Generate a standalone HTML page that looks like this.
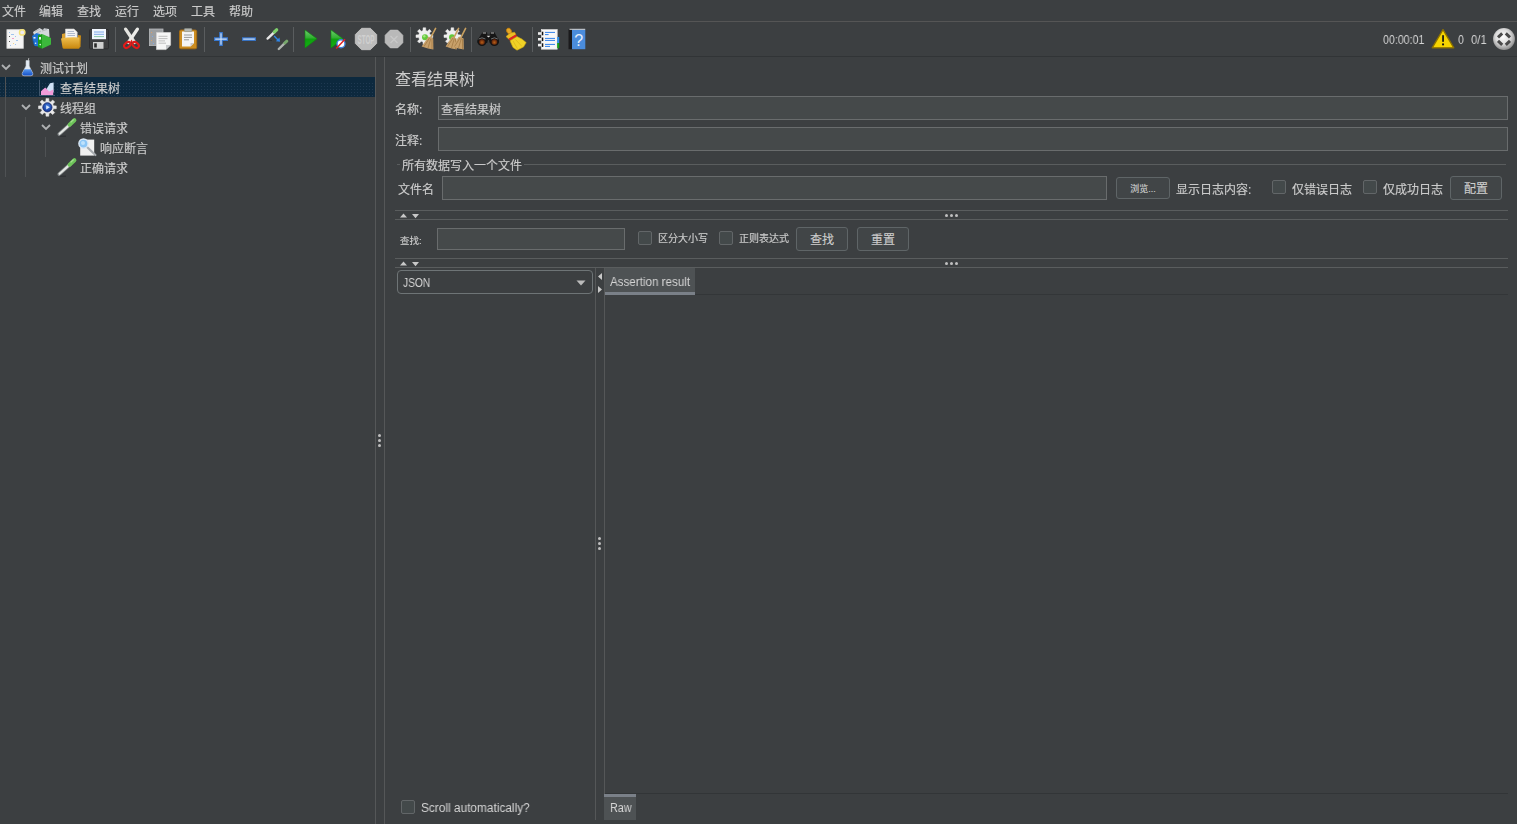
<!DOCTYPE html>
<html lang="zh">
<head>
<meta charset="utf-8">
<title>Apache JMeter</title>
<style>
*{box-sizing:border-box;margin:0;padding:0}
html,body{width:1517px;height:824px;overflow:hidden;background:#3c3f41}
body{position:relative;font-family:"Liberation Sans","Noto Sans CJK SC",sans-serif;font-size:12px;color:#cccccc;line-height:1;-webkit-text-stroke:0.15px #cccccc}
.a{position:absolute}
.t{position:absolute;white-space:nowrap;line-height:14px;height:14px;margin-top:1px;will-change:transform}
.en{-webkit-text-stroke:0;color:#d4d4d4}
.hl{position:absolute;height:1px;background:#5a5d5e}
.vl{position:absolute;width:1px;background:#555758}
.fld{position:absolute;background:#45494a;border:1px solid #696c6d}
.btn{position:absolute;background:#414547;border:1px solid #5f6567;padding-top:1px;border-radius:3px;text-align:center}
.cb{position:absolute;width:14px;height:14px;background:#43494a;border:1px solid #626668;border-radius:2px}
.sep{position:absolute;top:27px;width:1px;height:25px;background:#515151}
.dot{position:absolute;width:3px;height:3px;border-radius:50%;background:#c0c0c0}
</style>
</head>
<body>
<!-- menu bar -->
<div class="a" style="left:0;top:0;width:1517px;height:21px;background:#3c3f41"></div>
<div class="t" style="left:2px;top:4px">文件</div>
<div class="t" style="left:39px;top:4px">编辑</div>
<div class="t" style="left:77px;top:4px">查找</div>
<div class="t" style="left:115px;top:4px">运行</div>
<div class="t" style="left:153px;top:4px">选项</div>
<div class="t" style="left:191px;top:4px">工具</div>
<div class="t" style="left:229px;top:4px">帮助</div>
<div class="hl" style="left:0;top:21px;width:1517px;background:#555555"></div>
<!-- toolbar -->
<div id="toolbar">
<svg class="a" style="left:0;top:22px" width="620" height="34" viewBox="0 22 620 34">
<defs><linearGradient id="gplay" x1="0" y1="0" x2="0" y2="1"><stop offset="0" stop-color="#6fcf6f"/><stop offset="0.45" stop-color="#2fae2f"/><stop offset="0.5" stop-color="#0fa00f"/><stop offset="1" stop-color="#12b012"/></linearGradient><linearGradient id="gfold" x1="0" y1="0" x2="0" y2="1"><stop offset="0" stop-color="#f0c050"/><stop offset="1" stop-color="#c8860c"/></linearGradient><linearGradient id="gblue" x1="0" y1="0" x2="1" y2="0"><stop offset="0" stop-color="#3b7fd8"/><stop offset="1" stop-color="#5a9be6"/></linearGradient><radialGradient id="glens" cx="0.5" cy="0.6" r="0.6"><stop offset="0" stop-color="#b86018"/><stop offset="1" stop-color="#4a1406"/></radialGradient><radialGradient id="gball" cx="0.45" cy="0.4" r="0.6"><stop offset="0" stop-color="#ffffff"/><stop offset="0.55" stop-color="#dcdcdc"/><stop offset="1" stop-color="#8e8e8e"/></radialGradient></defs>
<rect x="115" y="27" width="1" height="25" fill="#5a5d5f"/>
<rect x="204" y="27" width="1" height="25" fill="#5a5d5f"/>
<rect x="293" y="27" width="1" height="25" fill="#5a5d5f"/>
<rect x="410" y="27" width="1" height="25" fill="#5a5d5f"/>
<rect x="471" y="27" width="1" height="25" fill="#5a5d5f"/>
<rect x="532" y="27" width="1" height="25" fill="#5a5d5f"/>
<rect x="6.9" y="29.7" width="16.4" height="18.6" fill="#f5f5f5" stroke="#d2d2d2" stroke-width="0.8"/>
<g fill="#9fc4ee"><rect x="9" y="32" width="1" height="1"/><rect x="11" y="34" width="3" height="1"/><rect x="15" y="36" width="1" height="1"/><rect x="9" y="41" width="1" height="1" fill="#555"/><rect x="9" y="36" width="1" height="1" fill="#555"/><rect x="12" y="38" width="2" height="1" fill="#f0a0c8"/><rect x="16" y="40" width="2" height="1"/><rect x="13" y="43" width="1" height="1" fill="#f0d890"/><rect x="10" y="45" width="1" height="1"/><rect x="15" y="44" width="1" height="1"/></g>
<circle cx="22.2" cy="32.4" r="2.7" fill="#eeeaf2" stroke="#f4e27a" stroke-width="1.5"/>
<path d="M33 32 L39.5 28 L43 30 L44 28.2 L49 29 L49.5 37 L40 36 L34 35Z" fill="#d4d8dc"/>
<path d="M35 31.5 L40 29 M42 31 L47 29.5 M37 33 L41 31" stroke="#a8acb0" stroke-width="0.8"/>
<path d="M32 36 L36.5 33 L40 34 L40 46.5 L34.5 46Z" fill="#1e72d4"/>
<path d="M32 36 L34.5 46 L33 43Z" fill="#1558aa"/>
<rect x="33.5" y="37" width="2" height="1.6" fill="#e8f0fa"/><circle cx="35.6" cy="43.3" r="0.8" fill="#e8f0fa"/>
<path d="M38 35.2 L42 34 L42 48.8 L38 47Z" fill="#1c9c1c"/>
<path d="M42 34 L44.5 35 L51 38 L51 44.5 L42 48.8Z" fill="#3cb83c"/>
<rect x="39" y="37" width="2" height="2.6" fill="#eaf6ea"/><circle cx="40.2" cy="44.6" r="0.8" fill="#eaf6ea"/>
<path d="M62 34 L66 33 L66 38 L62 39Z" fill="#d9a030"/>
<path d="M65.5 29 L74 29 L77.2 32 L77.2 39 L65.5 39Z" fill="#f4f4f4" stroke="#d0d0d0" stroke-width="0.6"/>
<path d="M67.5 31.5 H74 M67.5 33.5 H75 M67.5 35.5 H75" stroke="#a8b4c8" stroke-width="0.9"/>
<path d="M78 35 L81 35.5 L80.5 47 L78 48Z" fill="#c88a14"/>
<path d="M61 38.5 Q70 36.5 79.5 37.5 L79.5 48 Q79.5 48.8 78.5 48.8 L64 48.8 Q62.8 48.8 62.5 47.5Z" fill="url(#gfold)"/>
<rect x="89.5" y="29.5" width="19" height="19.3" rx="1" fill="#3e3e40" stroke="#2a2a2c" stroke-width="0.8"/>
<rect x="92" y="29" width="14" height="10.2" fill="#f2f7ff"/>
<path d="M94 32 H104 M94 34.3 H104" stroke="#7fa8e8" stroke-width="1"/><path d="M94 36.6 H104" stroke="#8cc8a8" stroke-width="1"/>
<rect x="93" y="42" width="10.5" height="6.8" fill="#cfcfcf"/><rect x="94.2" y="43.3" width="2.6" height="4.2" fill="#2a2a2a"/>
<path d="M125.6 29.2 L134.6 42.5" stroke="#e4e4e0" stroke-width="3.3" stroke-linecap="round"/>
<path d="M137.4 29.2 L128.4 42.5" stroke="#ecece8" stroke-width="3.3" stroke-linecap="round"/>
<ellipse cx="127.3" cy="45" rx="3.6" ry="2.4" transform="rotate(-38 127.3 45)" fill="none" stroke="#e21a1a" stroke-width="2"/>
<ellipse cx="135.7" cy="45" rx="3.6" ry="2.4" transform="rotate(38 135.7 45)" fill="none" stroke="#e21a1a" stroke-width="2"/>
<path d="M130 42.5 L131.5 39.5 L133 42.5Z" fill="#e21a1a"/>
<rect x="149.5" y="29" width="13.5" height="16.6" fill="#9c9fa2" stroke="#b9bbbe" stroke-width="0.8"/>
<g fill="#d8a070"><rect x="151" y="32" width="1" height="1"/><rect x="152" y="36" width="1" height="1" fill="#7fa8e8"/><rect x="151" y="40" width="1" height="1"/><rect x="153" y="43" width="1" height="1" fill="#7fa8e8"/></g>
<path d="M156.5 32.5 H170.6 V45 L166 49.6 H156.5Z" fill="#f5f5f5" stroke="#d4d4d4" stroke-width="0.7"/>
<path d="M166 49.6 V45 H170.6Z" fill="#c4c6c8"/>
<path d="M158.5 36.3 H167.5 M158.5 38.6 H167.5 M158.5 40.9 H165 M158.5 43.2 H166" stroke="#b0b0b0" stroke-width="0.8"/>
<rect x="179.5" y="30" width="17.2" height="18.8" rx="1.5" fill="#cb8c20" stroke="#a86c10" stroke-width="0.9"/>
<path d="M182 31.5 H194 V43 L190.5 46.6 H182Z" fill="#f5f5f5"/>
<path d="M190.5 46.6 V43 H194Z" fill="#c9c9c9"/>
<rect x="184.3" y="28.6" width="7.6" height="3" rx="0.8" fill="#b4b8b4" stroke="#8a8e8a" stroke-width="0.6"/>
<path d="M184 35 H192 M184 37.4 H192 M184 39.8 H189" stroke="#8e8e8e" stroke-width="0.9"/>
<path d="M219.2 32 H222.8 V37.3 H228 V40.9 H222.8 V46 H219.2 V40.9 H214 V37.3 H219.2Z" fill="#3878d0"/>
<path d="M220.4 33.2 H221.6 V38.5 H226.8 V39.7 H221.6 V44.8 H220.4 V39.7 H215.2 V38.5 H220.4Z" fill="#cfe0f6"/>
<rect x="242" y="37.3" width="14" height="3.6" fill="#3878d0"/><rect x="243.2" y="38.5" width="11.6" height="1.2" fill="#cfe0f6"/>
<path d="M267.6 38.6 L274.6 31.8" stroke="#e6e6e6" stroke-width="2.4" stroke-linecap="round"/>
<path d="M274.3 32 L276.7 29.8" stroke="#7fd06c" stroke-width="3.2" stroke-linecap="round"/>
<path d="M268.5 40 L272 40.6" stroke="#2c2e30" stroke-width="1"/>
<path d="M274.2 36 L278 40" stroke="#2f86e8" stroke-width="1.3"/><path d="M280 41.8 L275.8 41.3 L279.5 37.6Z" fill="#2f86e8"/>
<path d="M278.8 49 L285 42.8" stroke="#b0b4b0" stroke-width="2.4" stroke-linecap="round"/>
<path d="M284.8 43 L286.8 41.2" stroke="#78a86c" stroke-width="3" stroke-linecap="round"/>
<path d="M305 30 L317 38.8 L305 48Z" fill="url(#gplay)" stroke="#0c8a0c" stroke-width="0.6"/>
<path d="M331 30 L343 38.8 L331 48Z" fill="url(#gplay)" stroke="#0c8a0c" stroke-width="0.6"/>
<circle cx="341" cy="43.8" r="4" fill="#ffffff" stroke="#3f82dc" stroke-width="1.4"/>
<path d="M336.2 48.6 L345 39.2" stroke="#e02222" stroke-width="1.5"/>
<polygon points="376.7,43.4 370.4,49.7 361.6,49.7 355.3,43.4 355.3,34.6 361.6,28.3 370.4,28.3 376.7,34.6" fill="#bcbcbc" stroke="#c8c8c8" stroke-width="0.8"/>
<text x="366" y="43.6" font-family="Liberation Sans, sans-serif" font-weight="bold" font-size="12" fill="#d0d0d0" text-anchor="middle" textLength="17" lengthAdjust="spacingAndGlyphs">STOP</text>
<polygon points="402.9,42.7 397.7,47.9 390.3,47.9 385.1,42.7 385.1,35.3 390.3,30.1 397.7,30.1 402.9,35.3" fill="#b9b9b9" stroke="#c2c2c2" stroke-width="0.6"/>
<path d="M390.5 36 L397.5 43 M397.5 36 L390.5 43" stroke="#c9c9c9" stroke-width="1.2"/>
<path d="M430.1 34.8 L432.8 34.9 L432.8 37.5 L430.1 37.6 L429.4 39.3 L431.3 41.2 L429.4 43.1 L427.5 41.2 L425.8 41.9 L425.7 44.6 L423.1 44.6 L423.0 41.9 L421.3 41.2 L419.4 43.1 L417.5 41.2 L419.4 39.3 L418.7 37.6 L416.0 37.5 L416.0 34.9 L418.7 34.8 L419.4 33.1 L417.5 31.2 L419.4 29.3 L421.3 31.2 L423.0 30.5 L423.1 27.8 L425.7 27.8 L425.8 30.5 L427.5 31.2 L429.4 29.3 L431.3 31.2 L429.4 33.1Z" fill="#eeeeee" stroke="#eeeeee" stroke-width="0.5" stroke-linejoin="round"/>
<circle cx="425" cy="37.2" r="3" fill="#62c83a"/><circle cx="424.3" cy="36.3" r="1.2" fill="#a4e480"/>
<path d="M435.6 28.4 L430.4 38.2" stroke="#c8a060" stroke-width="1.6" stroke-linecap="round"/>
<path d="M428.6 36.4 L433.2 38.6 L433.4 49.6 L428 48.6 L421.6 46.4Z" fill="#c8a06a"/>
<path d="M429.5 38 L424 46.5 M430.8 38.5 L428 48 M432 39 L432 49" stroke="#a27a44" stroke-width="0.8"/>
<path d="M458.1 34.8 L460.8 34.9 L460.8 37.5 L458.1 37.6 L457.4 39.3 L459.3 41.2 L457.4 43.1 L455.5 41.2 L453.8 41.9 L453.7 44.6 L451.1 44.6 L451.0 41.9 L449.3 41.2 L447.4 43.1 L445.5 41.2 L447.4 39.3 L446.7 37.6 L444.0 37.5 L444.0 34.9 L446.7 34.8 L447.4 33.1 L445.5 31.2 L447.4 29.3 L449.3 31.2 L451.0 30.5 L451.1 27.8 L453.7 27.8 L453.8 30.5 L455.5 31.2 L457.4 29.3 L459.3 31.2 L457.4 33.1Z" fill="#eeeeee" stroke="#eeeeee" stroke-width="0.5" stroke-linejoin="round"/>
<circle cx="452" cy="37.2" r="3" fill="#62c83a"/>
<path d="M458.6 28.4 L453.6 38.2" stroke="#c8a060" stroke-width="1.6" stroke-linecap="round"/>
<path d="M452 36.4 L456.6 38.6 L456.8 49.6 L451.5 48.6 L445.6 46.4Z" fill="#c8a06a"/>
<path d="M453 38 L447.5 46.5 M454.3 38.5 L451.5 48 M455.5 39 L455.5 49" stroke="#a27a44" stroke-width="0.8"/>
<path d="M465.6 28.4 L460.6 38.2" stroke="#c8a060" stroke-width="1.6" stroke-linecap="round"/>
<path d="M459 36.4 L463.6 38.6 L463.8 49.6 L458.5 48.6 L452.6 46.4Z" fill="#c8a06a"/>
<path d="M460 38 L454.5 46.5 M461.3 38.5 L458.5 48 M462.5 39 L462.5 49" stroke="#a27a44" stroke-width="0.8"/>
<path d="M482.5 32.2 L486.8 32.2 L487.6 35 L488.5 34.6 L489.5 35 L490.2 32.2 L494.5 32.2 L498.6 40 L498.6 43 L489.8 43 L489 40 L488 40 L487.2 43 L477.6 43 L477.6 40Z" fill="#161616"/>
<path d="M482.8 33 L486 33 M490.8 33 L494 33" stroke="#c8c8c8" stroke-width="0.9"/>
<path d="M486.6 35.8 L490.4 35.8 L488.5 37.6Z" fill="#d8d8d8"/>
<circle cx="482" cy="41.5" r="4.6" fill="#141414"/><circle cx="494.4" cy="41.5" r="4.6" fill="#141414"/>
<circle cx="482" cy="41.8" r="2.9" fill="url(#glens)"/><circle cx="494.4" cy="41.8" r="2.9" fill="url(#glens)"/>
<path d="M478.6 39 Q482 36.6 485.4 39 M491 39 Q494.4 36.6 497.8 39" stroke="#9a9a9a" stroke-width="0.7" fill="none"/>
<ellipse cx="509" cy="31" rx="2.3" ry="3" transform="rotate(-28 509 31)" fill="#e6a828" stroke="#c07c08" stroke-width="0.8"/>
<path d="M506 36.6 Q510 32 514.6 32.2 L516 34.6 L508.6 39Z" fill="#ecbc24" stroke="#c89a10" stroke-width="0.5"/>
<path d="M508.6 38.8 L516 34.5 L517 36.6 L510 40.8Z" fill="#e02222"/>
<path d="M510 40.8 L517 36.6 Q523 39 526.2 42.6 L523.5 47 L517 50.2 L513 47.4Z" fill="#f0d226" stroke="#c8a410" stroke-width="0.6"/>
<path d="M513 41 L517.5 48.8 M515.5 39.5 L522 46.5" stroke="#d8b418" stroke-width="0.7"/>
<rect x="541.4" y="29.6" width="15.8" height="19.6" fill="#f7f7f7" stroke="#dadada" stroke-width="0.7"/>
<rect x="538" y="32.2" width="4.6" height="2.6" fill="#ededed"/><rect x="541.8" y="31.7" width="1.5" height="3.6" fill="#111"/>
<rect x="538" y="38.0" width="4.6" height="2.6" fill="#ededed"/><rect x="541.8" y="37.5" width="1.5" height="3.6" fill="#111"/>
<rect x="538" y="43.800000000000004" width="4.6" height="2.6" fill="#ededed"/><rect x="541.8" y="43.300000000000004" width="1.5" height="3.6" fill="#111"/>
<path d="M545 32.4 H555 M545 34.6 H548.6 M545 38.4 H555 M545 40.4 H555 M545 44.4 H555 M545 46.4 H550" stroke="#2f80ea" stroke-width="1"/>
<rect x="557.2" y="37" width="2" height="6" fill="#2f90ea"/><rect x="557.2" y="43" width="2" height="5.2" fill="#16a016"/>
<rect x="568.5" y="29.4" width="4.2" height="19.8" fill="#1a1a1c"/>
<rect x="572" y="29.6" width="13.3" height="19.6" fill="#4a8cdc"/>
<path d="M569.5 29.3 H585.2" stroke="#e8e8e8" stroke-width="0.9"/>
<text x="578.6" y="45.6" font-family="Liberation Sans, sans-serif" font-size="16" fill="#e6effb" text-anchor="middle">?</text>
</svg>
<svg class="a" style="left:1425px;top:22px" width="92" height="34" viewBox="1425 22 92 34">
<path d="M1443 29.6 L1453.8 47.8 L1432.2 47.8Z" fill="#f6d400" stroke="#8c7000" stroke-width="1.3" stroke-linejoin="round"/>
<rect x="1442.2" y="35.2" width="1.7" height="6.6" fill="#111"/><circle cx="1443.05" cy="44.4" r="1.05" fill="#111"/>
<circle cx="1504" cy="39" r="10.9" fill="url(#gball)"/>
<path d="M1498 37.4 L1502.2 33.4 M1505.8 33.4 L1510 37.4 M1498 40.8 L1502.2 44.8 M1505.8 44.8 L1510 40.8" stroke="#4a4a4a" stroke-width="3"/>
</svg>
<div class="t en" style="left:1383px;top:32px;font-size:12.5px;transform:scaleX(0.85);transform-origin:0 0">00:00:01</div><div class="t en" style="left:1458px;top:32px;font-size:12.5px;transform:scaleX(0.85);transform-origin:0 0">0</div><div class="t en" style="left:1471px;top:32px;font-size:12.5px;transform:scaleX(0.9);transform-origin:0 0">0/1</div>
</div><!--/toolbar-->
<div class="hl" style="left:0;top:56px;width:1517px;background:#313436"></div>
<!-- left tree -->
<div id="tree">
<div class="a" style="left:0;top:77px;width:375px;height:20px;background:#0d293e"></div>
<div class="a" style="left:0;top:83px;width:375px;height:14px;background:radial-gradient(circle at 0.5px 0.5px,#1f3951 0,#1f3951 0.5px,transparent 0.65px) 0 0/3px 3px"></div>
<div class="vl" style="left:5px;top:77px;height:100px;background:#4f5254"></div>
<div class="vl" style="left:25px;top:117px;height:60px;background:#4f5254"></div>
<div class="vl" style="left:45px;top:137px;height:20px;background:#4f5254"></div>
<svg class="a" style="left:1px;top:64px" width="10" height="7" viewBox="0 0 10 7"><path d="M1 1 L5 5 L9 1" fill="none" stroke="#afb1b3" stroke-width="1.8"/></svg>
<div class="t" style="left:40px;top:61px">测试计划</div>
<div class="t" style="left:60px;top:81px;color:#d0d0d0">查看结果树</div>
<svg class="a" style="left:21px;top:104px" width="10" height="7" viewBox="0 0 10 7"><path d="M1 1 L5 5 L9 1" fill="none" stroke="#afb1b3" stroke-width="1.8"/></svg>
<div class="t" style="left:60px;top:101px">线程组</div>
<svg class="a" style="left:41px;top:124px" width="10" height="7" viewBox="0 0 10 7"><path d="M1 1 L5 5 L9 1" fill="none" stroke="#afb1b3" stroke-width="1.8"/></svg>
<div class="t" style="left:80px;top:121px">错误请求</div>
<div class="t" style="left:100px;top:141px">响应断言</div>
<div class="t" style="left:80px;top:161px">正确请求</div>
</div>
<!--ticons--><svg class="a" style="left:0;top:57px" width="120" height="122" viewBox="0 57 120 122">
<defs><linearGradient id="gblu2" x1="0" y1="0" x2="0" y2="1"><stop offset="0" stop-color="#5a9af0"/><stop offset="1" stop-color="#1450c8"/></linearGradient><radialGradient id="ggear" cx="0.5" cy="0.4" r="0.6"><stop offset="0" stop-color="#4a88e8"/><stop offset="1" stop-color="#0c2c8c"/></radialGradient></defs>
<path d="M28.8 58 L28 62" stroke="#c8c8c8" stroke-width="0.8"/>
<path d="M26 60.5 H29.2 V66 L32.8 73.2 Q33.4 75.6 31 75.8 H24 Q21.6 75.6 22.2 73.2 L26 66Z" fill="#e4ecf4" stroke="#c4ccd4" stroke-width="0.6"/>
<path d="M24.4 69.2 H30.8 L32.6 73.2 Q33 75.4 31 75.5 H24 Q22 75.4 22.4 73.2Z" fill="url(#gblu2)"/>
<path d="M39.5 80 V95.5 H55" stroke="#566a80" stroke-width="1" fill="none" opacity="0.7"/>
<path d="M46.5 89 L50 83.2 L53.6 82.6 L53.6 92.5 L48 92.5Z" fill="#cfe2f6"/>
<path d="M41 95 V91.2 L45.2 87.6 L49.2 91.6 L53.2 89.4 V95Z" fill="#f29cda"/>
<path d="M53.5 105.8 L56.3 105.9 L56.3 108.7 L53.5 108.8 L52.8 110.6 L54.7 112.6 L52.7 114.6 L50.7 112.7 L48.9 113.4 L48.8 116.2 L46.0 116.2 L45.9 113.4 L44.1 112.7 L42.1 114.6 L40.1 112.6 L42.0 110.6 L41.3 108.8 L38.5 108.7 L38.5 105.9 L41.3 105.8 L42.0 104.0 L40.1 102.0 L42.1 100.0 L44.1 101.9 L45.9 101.2 L46.0 98.4 L48.8 98.4 L48.9 101.2 L50.7 101.9 L52.7 100.0 L54.7 102.0 L52.8 104.0Z" fill="#e8e8e8" stroke="#e8e8e8" stroke-width="0.5" stroke-linejoin="round"/>
<circle cx="47.4" cy="107.3" r="4.6" fill="url(#ggear)" stroke="#1a2c6c" stroke-width="0.8"/><path d="M46.2 105.2 L49.8 107.3 L46.2 109.4Z" fill="#dce8fc"/>
<path d="M59.2 134.2 L69.8 124.6" stroke="#7c8082" stroke-width="3.6" stroke-linecap="round"/>
<path d="M59.6 133.8 L69.8 124.6" stroke="#e4e6e4" stroke-width="2.2" stroke-linecap="round"/>
<path d="M69.6 124.8 L74.4 120.2" stroke="#6ec45a" stroke-width="4" stroke-linecap="round"/>
<path d="M71 122 L73.4 119.8" stroke="#a4e090" stroke-width="1.2" stroke-linecap="round"/>
<path d="M60 136.2 H66" stroke="#2c2e30" stroke-width="1"/>
<path d="M59.2 174.2 L69.8 164.6" stroke="#7c8082" stroke-width="3.6" stroke-linecap="round"/>
<path d="M59.6 173.8 L69.8 164.6" stroke="#e4e6e4" stroke-width="2.2" stroke-linecap="round"/>
<path d="M69.6 164.8 L74.4 160.2" stroke="#6ec45a" stroke-width="4" stroke-linecap="round"/>
<path d="M71 162 L73.4 159.8" stroke="#a4e090" stroke-width="1.2" stroke-linecap="round"/>
<path d="M60 176.2 H66" stroke="#2c2e30" stroke-width="1"/>
<path d="M80.2 139.6 H94.2 V155.6 H80.2Z" fill="#f0f0f0"/>
<path d="M87 147 L95.4 155" stroke="#a8acb0" stroke-width="2.2" stroke-linecap="round"/>
<circle cx="83.5" cy="143.6" r="4.6" fill="#8cc6f6" stroke="#dce8f4" stroke-width="1.4"/><circle cx="83" cy="143" r="2" fill="#bfe2fc"/>
</svg><!--/ticons-->
<!-- main dividers -->
<div class="vl" style="left:375px;top:57px;height:767px"></div>
<div class="vl" style="left:384px;top:57px;height:767px"></div>
<!-- right panel -->
<div id="right">
<div class="t" style="left:395px;top:69px;font-size:16px;line-height:20px;height:20px;-webkit-text-stroke:0">查看结果树</div>
<div class="t" style="left:395px;top:102px">名称:</div>
<div class="fld" style="left:438px;top:96px;width:1070px;height:24px"></div>
<div class="t" style="left:441px;top:102px">查看结果树</div>
<div class="t" style="left:395px;top:133px">注释:</div>
<div class="fld" style="left:438px;top:127px;width:1070px;height:24px"></div>
<!-- fieldset -->
<div class="hl" style="left:397px;top:164px;width:3px"></div>
<div class="t" style="left:402px;top:158px">所有数据写入一个文件</div>
<div class="hl" style="left:524px;top:164px;width:982px"></div>
<div class="t" style="left:398px;top:182px">文件名</div>
<div class="fld" style="left:442px;top:176px;width:665px;height:24px"></div>
<div class="btn" style="left:1116px;top:177px;width:54px;height:22px;font-size:9px;line-height:20px">浏览...</div>
<div class="t" style="left:1176px;top:182px">显示日志内容:</div>
<div class="cb" style="left:1272px;top:180px"></div>
<div class="t" style="left:1292px;top:182px">仅错误日志</div>
<div class="cb" style="left:1363px;top:180px"></div>
<div class="t" style="left:1383px;top:182px">仅成功日志</div>
<div class="btn" style="left:1450px;top:176px;width:52px;height:24px;line-height:22px">配置</div>
<!-- splitter 1 -->
<div class="hl" style="left:395px;top:210px;width:1113px"></div>
<div class="hl" style="left:395px;top:219px;width:1113px"></div>
<svg class="a" style="left:399px;top:212px" width="22" height="7" viewBox="0 0 22 7"><path d="M1 5.5 L4.5 1.5 L8 5.5Z M13 2 L20 2 L16.5 6.2Z" fill="#c8c8c8"/></svg>
<div class="dot" style="left:945px;top:214px"></div><div class="dot" style="left:950px;top:214px"></div><div class="dot" style="left:955px;top:214px"></div>
<!-- search row -->
<div class="t" style="left:400px;top:233px;font-size:9.5px">查找:</div>
<div class="fld" style="left:437px;top:228px;width:188px;height:22px"></div>
<div class="cb" style="left:638px;top:231px"></div>
<div class="t" style="left:658px;top:231px;font-size:10px">区分大小写</div>
<div class="cb" style="left:719px;top:231px"></div>
<div class="t" style="left:739px;top:231px;font-size:10px">正则表达式</div>
<div class="btn" style="left:796px;top:227px;width:52px;height:24px;line-height:22px">查找</div>
<div class="btn" style="left:857px;top:227px;width:52px;height:24px;line-height:22px">重置</div>
<!-- splitter 2 -->
<div class="hl" style="left:395px;top:258px;width:1113px"></div>
<div class="hl" style="left:395px;top:267px;width:1113px"></div>
<svg class="a" style="left:399px;top:260px" width="22" height="7" viewBox="0 0 22 7"><path d="M1 5.5 L4.5 1.5 L8 5.5Z M13 2 L20 2 L16.5 6.2Z" fill="#c8c8c8"/></svg>
<div class="dot" style="left:945px;top:262px"></div><div class="dot" style="left:950px;top:262px"></div><div class="dot" style="left:955px;top:262px"></div>
<!-- combo -->
<div class="a" style="left:397px;top:270px;width:196px;height:24px;border:1px solid #6e7476;border-radius:4px;background:#3c3f41"></div>
<div class="t en" style="left:403px;top:275px;font-size:12.5px;transform:scaleX(0.819);transform-origin:0 0">JSON</div>
<svg class="a" style="left:576px;top:280px" width="10" height="6" viewBox="0 0 10 6"><path d="M0.5 0.5 L9.5 0.5 L5 5.5Z" fill="#bbbbbb"/></svg>
<!-- inner divider -->
<div class="vl" style="left:595px;top:268px;height:552px"></div>
<div class="vl" style="left:604px;top:268px;height:526px"></div>
<svg class="a" style="left:597px;top:272px" width="6" height="22" viewBox="0 0 6 22"><path d="M5 1 L5 8 L1 4.5Z M1 14 L1 21 L5 17.5Z" fill="#c8c8c8"/></svg>
<div class="dot" style="left:598px;top:537px"></div><div class="dot" style="left:598px;top:542px"></div><div class="dot" style="left:598px;top:547px"></div>
<!-- top tab -->
<div class="a" style="left:605px;top:268px;width:90px;height:27px;background:#4e5254;border-bottom:3px solid #7a8088"></div>
<div class="t en" style="left:610px;top:274px;font-size:12.5px;transform:scaleX(0.929);transform-origin:0 0">Assertion result</div>
<div class="hl" style="left:695px;top:294px;width:813px;background:#333638"></div>
<!-- bottom tab -->
<div class="hl" style="left:605px;top:793px;width:903px;background:#323537"></div>
<div class="a" style="left:604px;top:794px;width:32px;height:26px;background:#4e5254;border-top:3px solid #7a8088"></div>
<div class="t en" style="left:610px;top:800px;font-size:12.5px;transform:scaleX(0.86);transform-origin:0 0">Raw</div>
<!-- scroll auto -->
<div class="cb" style="left:401px;top:800px"></div>
<div class="t en" style="left:421px;top:800px;font-size:12.5px;transform:scaleX(0.948);transform-origin:0 0">Scroll automatically?</div>
<!-- main divider dots -->
<div class="dot" style="left:378px;top:434px"></div><div class="dot" style="left:378px;top:439px"></div><div class="dot" style="left:378px;top:444px"></div>
</div>
</body>
</html>
